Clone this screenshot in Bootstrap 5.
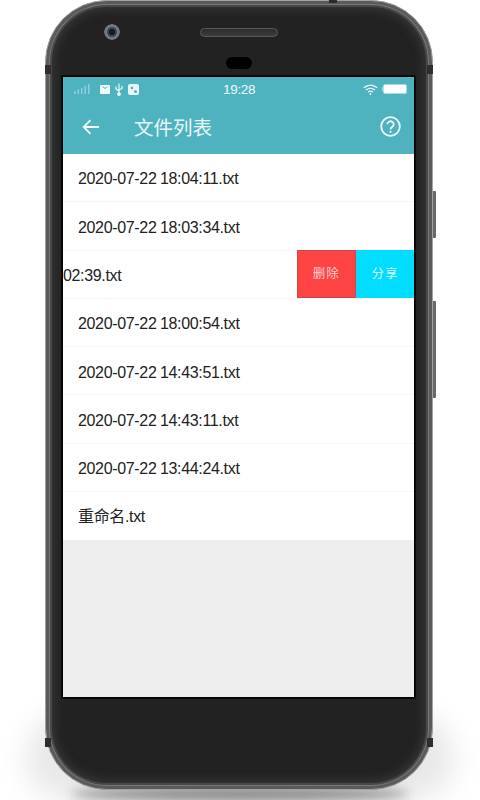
<!DOCTYPE html>
<html lang="zh">
<head>
<meta charset="utf-8">
<title>文件列表</title>
<link href="https://cdn.jsdelivr.net/npm/bootstrap@5.3.0/dist/css/bootstrap.min.css" rel="stylesheet">
<style>
html,body{width:480px;height:800px;margin:0;overflow:hidden;background:#fff;font-family:"Liberation Sans","Noto Sans CJK SC",sans-serif}
.stage{position:relative;width:480px;height:800px;overflow:hidden}
.floor{position:absolute;left:70px;top:787px;width:340px;height:14px;border-radius:50%;background:#808080;filter:blur(6px)}
.floor-wide{position:absolute;left:26px;top:715px;width:428px;height:85px;border-radius:60px;background:#e8e8e8;filter:blur(14px)}
.phone{position:absolute;left:45px;top:0;width:388px;height:790px;border-radius:62px;background:#222;border:1px solid #a2a2a2;box-shadow:inset 0 0 0 3px #5a5a5a,inset 0 0 0 4px #787878,inset 0 0 0 6px #484848,inset 0 0 10px 9px #363636}
.side{position:absolute;background:#6a6a6a;width:3px;left:433px;border-radius:0 1px 1px 0}
.side-a{top:191px;height:47px}
.side-b{top:301px;height:97px}
.band{position:absolute;width:6px;height:9px;background:#2e2e2e}
.band-tl{left:45px;top:65px}.band-tr{left:427px;top:65px}
.band-bl{left:45px;top:738px}.band-br{left:427px;top:738px}
.band-top{position:absolute;left:329px;top:0;width:8px;height:3px;background:#2b2b2b}
.cam{position:absolute;left:104px;top:24px;width:16px;height:16px;border-radius:50%;background:radial-gradient(circle,#121c28 0 3px,#3a4650 3.5px 4.500px,#77777a 5.500px 7.500px,#333 8px)}
.speaker{position:absolute;left:200px;top:28px;width:78px;height:9px;border-radius:5px;background:linear-gradient(#2c2c2c,#3c3c3c);border:1px solid #5a5a5a}
.sensor{position:absolute;left:226px;top:57px;width:26px;height:12px;border-radius:6px;background:#000}
.screen{position:absolute;left:62px;top:76px;width:353px;height:622px;border:1px solid #000;background:#eee;overflow:hidden;box-shadow:0 0 0 1px #0a0a0a}
.appbar{background:#4fb3bf;height:77px;color:#fff}
.statusbar{height:24px;padding:0 7px 0 11px;font-size:13.5px;color:#f2fbfc}
.status-time{position:absolute;left:160px;top:4px;width:31px;text-align:center;letter-spacing:-.3px;line-height:17px}
.icon-mail{margin-left:9px}
.icon-usb{margin-left:5px}
.icon-app{margin-left:5px}
.toolbar{height:53px;padding:0 13px 2px 19px}
.page-title{font-size:19.5px;line-height:1;margin-left:34px;font-weight:400;color:#e9f7f8;font-family:"Noto Sans CJK SC",sans-serif}
.file-list{background:#fff}
.file-row{height:48.3px;border-bottom:1px solid #f6f6f6;font-size:16px;letter-spacing:-.34px;word-spacing:-.6px;color:#222;padding:3.6px 0 0 15px;white-space:nowrap;overflow:hidden}
.file-row:last-child{border-bottom:0;padding-top:1px}
.file-row.swiped{padding:0;overflow:visible}
.swiped-name{padding-top:3px}
.actions{height:calc(100% + 1px);margin-top:-1px;margin-left:auto;letter-spacing:0}
.act{width:59.5px;height:100%;font-size:12.500px;letter-spacing:1px;font-family:"Noto Sans CJK SC",sans-serif}
.act-del{background:#fe4343;border:1px solid #c9494c;color:#ffd4d4}
.act-share{background:#01dcff;width:58px;color:#d4f7ff}
</style>
</head>
<body>
<div class="stage">
  <div class="floor-wide"></div>
  <div class="floor"></div>
  <div class="side side-a"></div>
  <div class="side side-b"></div>
  <div class="phone"></div>
  <div class="band band-tl"></div><div class="band band-tr"></div>
  <div class="band band-bl"></div><div class="band band-br"></div>
  <div class="band-top"></div>
  <div class="cam"></div>
  <div class="speaker"></div>
  <div class="sensor"></div>

  <div class="screen d-flex flex-column">
    <div class="appbar">
      <div class="statusbar d-flex align-items-center position-relative">
        <svg width="17" height="10" viewBox="0 0 17 10" fill="#8fd0d8"><rect x="0" y="7" width="1.500" height="3"/><rect x="3.500" y="5.500" width="1.500" height="4.500"/><rect x="7" y="4" width="1.500" height="6"/><rect x="10.500" y="2" width="1.500" height="8"/><rect x="14" y="0" width="1.500" height="10"/></svg>
        <svg class="icon-mail" width="10" height="9" viewBox="0 0 10 9"><rect width="10" height="9" rx="1" fill="#f4fbfc"/><path d="M2.500 1.500 Q5 5 7.500 1.500" fill="none" stroke="#4fb3bf" stroke-width="1"/></svg>
        <svg class="icon-usb" width="8" height="13" viewBox="0 0 8 12" fill="none" stroke="#f4fbfc" stroke-width="1.100"><path d="M4 0V12M1 3V5.500L4 7.500M7 2.500V5L4 6.500"/><circle cx="4" cy="10.500" r="1.300" fill="#f4fbfc"/></svg>
        <svg class="icon-app" width="11" height="11" viewBox="0 0 11 11"><rect width="11" height="11" rx="2" fill="#eaf7f8"/><circle cx="4" cy="4" r="1.300" fill="#4fb3bf"/><circle cx="7.500" cy="7.500" r="1.500" fill="#4fb3bf"/></svg>
        <span class="status-time">19:28</span>
        <svg class="ms-auto" width="15" height="11" viewBox="0 0 15 11" fill="none" stroke="#f4fbfc" stroke-width="1.100"><path d="M.8 3.8Q7.500-1.600 14.200 3.8M3 6Q7.500 2.400 12 6M5.200 8Q7.500 6.200 9.800 8"/><circle cx="7.500" cy="10" r=".9" fill="#f4fbfc" stroke="none"/></svg>
        <svg class="ms-1" width="25" height="10" viewBox="0 0 25 10"><rect x="1.500" y=".5" width="23" height="9" rx="1.500" fill="#fff" stroke="#a6dce2"/><rect x="0" y="3" width="1.500" height="4" fill="#a6dce2"/></svg>
      </div>
      <div class="toolbar d-flex align-items-center">
        <svg width="18" height="16" viewBox="0 0 18 16" fill="none" stroke="#f2fbfc" stroke-width="1.800"><path d="M17 8H2M8.500 1.200 1.700 8l6.800 6.800"/></svg>
        <h1 class="page-title mb-0">文件列表</h1>
        <svg class="ms-auto" width="21" height="21" viewBox="0 0 21 21" fill="none" stroke="#f2fbfc" stroke-width="1.800"><circle cx="10.500" cy="10.500" r="9.300"/><path d="M7.300 8.300a3.200 3 0 1 1 4.800 2.600c-1 .7-1.600 1.200-1.600 2.600"/><circle cx="10.500" cy="15.800" r="1.100" fill="#f2fbfc" stroke="none"/></svg>
      </div>
    </div>
    <div class="file-list">
      <div class="file-row d-flex align-items-center">2020-07-22 18:04:11.txt</div>
      <div class="file-row d-flex align-items-center">2020-07-22 18:03:34.txt</div>
      <div class="file-row swiped d-flex align-items-center">
        <span class="swiped-name">02:39.txt</span>
        <div class="actions d-flex">
          <div class="act act-del d-flex align-items-center justify-content-center">删除</div>
          <div class="act act-share d-flex align-items-center justify-content-center">分享</div>
        </div>
      </div>
      <div class="file-row d-flex align-items-center">2020-07-22 18:00:54.txt</div>
      <div class="file-row d-flex align-items-center">2020-07-22 14:43:51.txt</div>
      <div class="file-row d-flex align-items-center">2020-07-22 14:43:11.txt</div>
      <div class="file-row d-flex align-items-center">2020-07-22 13:44:24.txt</div>
      <div class="file-row d-flex align-items-center">重命名.txt</div>
    </div>
  </div>
</div>
<script src="https://cdn.jsdelivr.net/npm/bootstrap@5.3.0/dist/js/bootstrap.bundle.min.js"></script>
</body>
</html>
